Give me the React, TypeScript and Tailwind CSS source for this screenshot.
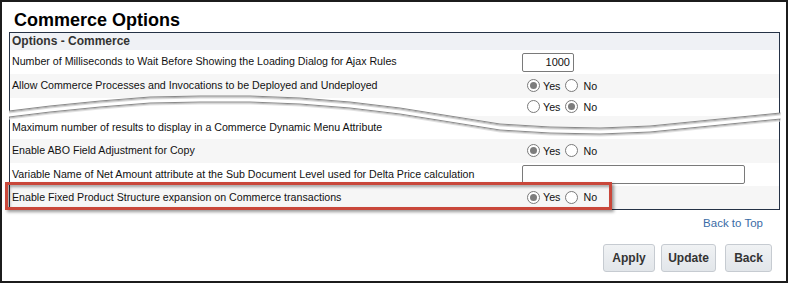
import React from 'react';

type Ctl =
  | { kind: 'none' }
  | { kind: 'input'; value: string; width: string; align: 'right' | 'left' }
  | { kind: 'radio'; yes: boolean };

type Row = { label: string; ctl: Ctl; h: string; gray?: boolean; marked?: boolean };

const upperRows: Row[] = [
  {
    label: 'Number of Milliseconds to Wait Before Showing the Loading Dialog for Ajax Rules',
    ctl: { kind: 'input', value: '1000', width: 'w-[52px]', align: 'right' },
    h: 'h-[24px]'
  },
  {
    label: 'Allow Commerce Processes and Invocations to be Deployed and Undeployed',
    ctl: { kind: 'radio', yes: true },
    h: 'h-[24px]',
    gray: true
  },
  { label: '', ctl: { kind: 'radio', yes: false }, h: 'h-[18px]' }
];

const lowerRows: Row[] = [
  { label: 'Maximum number of results to display in a Commerce Dynamic Menu Attribute', ctl: { kind: 'none' }, h: 'h-[23px]' },
  { label: 'Enable ABO Field Adjustment for Copy', ctl: { kind: 'radio', yes: true }, h: 'h-[24px]', gray: true },
  {
    label: 'Variable Name of Net Amount attribute at the Sub Document Level used for Delta Price calculation',
    ctl: { kind: 'input', value: '', width: 'w-[223px]', align: 'left' },
    h: 'h-[23px]'
  },
  {
    label: 'Enable Fixed Product Structure expansion on Commerce transactions',
    ctl: { kind: 'radio', yes: true },
    h: 'h-[23px]',
    gray: true,
    marked: true
  }
];

// torn-paper edge of the cut in the middle of the panel
const tearTop = [
  [9, 111], [50, 106], [100, 101], [150, 97], [200, 96], [250, 96], [300, 98], [350, 102],
  [400, 108], [450, 116], [500, 124], [550, 127], [600, 128], [650, 126], [700, 121], [740, 117], [780.5, 113]
];
const tearBottom = tearTop.map(([x, y]) => [x, y + 6]);
const pts = (p: number[][], dy = 0) => p.map(([x, y]) => `${x},${y + dy}`).join(' ');

function Radio({ on }: { on: boolean }) {
  return (
    <span className="w-[13px] h-[13px] rounded-full border border-[#7a7a7a] bg-white flex items-center justify-center">
      {on && <span className="w-[7px] h-[7px] rounded-full bg-[#7d7d7d]" />}
    </span>
  );
}

function Control({ ctl }: { ctl: Ctl }) {
  if (ctl.kind === 'input') {
    return (
      <div
        className={`${ctl.width} h-[19px] border border-[#7a7a7a] rounded-[2px] bg-white px-[3px] text-[11px] leading-[17px] ${
          ctl.align === 'right' ? 'text-right' : 'text-left'
        }`}
      >
        {ctl.value}
      </div>
    );
  }
  if (ctl.kind === 'radio') {
    return (
      <div className="flex items-center pl-[5px] text-[10.7px]">
        <Radio on={ctl.yes} />
        <span className="ml-[3px]">Yes</span>
        <span className="ml-[5px]">
          <Radio on={!ctl.yes} />
        </span>
        <span className="ml-[5px]">No</span>
      </div>
    );
  }
  return null;
}

function OptionRow({ row }: { row: Row }) {
  return (
    <div className={`relative grid grid-cols-[512px_1fr] items-center ${row.h} ${row.gray ? 'bg-[#f6f6f6]' : 'bg-white'}`}>
      <div className="pl-[2px] text-[10.65px] text-[#111] whitespace-nowrap">{row.label}</div>
      <Control ctl={row.ctl} />
      {row.marked && (
        <div className="absolute -left-[5px] -top-[4px] w-[607px] h-[28px] border-[3px] border-[#c9473a] shadow-[2px_2px_3px_rgba(0,0,0,0.4),inset_2px_2px_3px_rgba(0,0,0,0.35)]" />
      )}
    </div>
  );
}

export default function App() {
  return (
    <div className="relative w-[788px] h-[283px] bg-white overflow-hidden font-['Liberation_Sans',Arial,sans-serif] text-[#111]">
      <div className="h-full border-2 border-[#1c1c1c] pl-[7px] pr-[6px]">
        <h1 className="h-[30px] pt-[8px] pl-[5px] text-[18px] leading-[21px] font-bold text-black">Commerce Options</h1>

        <div className="border border-[#253246]">
          <div className="h-[17px] bg-[#eff1f5] pl-[2px] text-[12px] leading-[17px] font-bold text-[#333]">
            Options - Commerce
          </div>
          {upperRows.map((row, i) => (
            <OptionRow key={i} row={row} />
          ))}
          {lowerRows.map((row, i) => (
            <OptionRow key={i} row={row} />
          ))}
        </div>

        <div className="h-[28px] flex items-center justify-end pr-[17px]">
          <a href="#" className="text-[11.5px] text-[#3a6ba6]">
            Back to Top
          </a>
        </div>

        <div className="mt-[6px] flex justify-end pr-[8px]">
          <button className="w-[52px] h-[28px] rounded-[3px] border border-[#c6cbd1] bg-gradient-to-b from-[#f0f2f4] to-[#e2e6ea] text-[12px] font-bold text-[#333]">
            Apply
          </button>
          <button className="ml-[6px] w-[55px] h-[28px] rounded-[3px] border border-[#c6cbd1] bg-gradient-to-b from-[#f0f2f4] to-[#e2e6ea] text-[12px] font-bold text-[#333]">
            Update
          </button>
          <button className="ml-[9px] w-[47px] h-[28px] rounded-[3px] border border-[#c6cbd1] bg-gradient-to-b from-[#f0f2f4] to-[#e2e6ea] text-[12px] font-bold text-[#333]">
            Back
          </button>
        </div>
      </div>

      <svg className="absolute left-0 top-0 pointer-events-none" width="788" height="283" viewBox="0 0 788 283">
        <polygon points="445,116 500,124 550,127 600,128 650,126 700,121 740,117 746,116" fill="#f6f6f6" />
        <polygon points={`${pts(tearTop)} ${pts([...tearBottom].reverse())}`} fill="#ffffff" />
        <polyline points={pts(tearTop, 2)} fill="none" stroke="#dcdcdc" strokeWidth="1" />
        <polyline points={pts(tearTop, 1)} fill="none" stroke="#b4b4b4" strokeWidth="1" />
        <polyline points={pts(tearTop)} fill="none" stroke="#8a8a8a" strokeWidth="1" />
        <polyline points={pts(tearBottom, 2)} fill="none" stroke="#e2e2e2" strokeWidth="1" />
        <polyline points={pts(tearBottom, 1)} fill="none" stroke="#bdbdbd" strokeWidth="1" />
        <polyline points={pts(tearBottom)} fill="none" stroke="#8a8a8a" strokeWidth="1" />
      </svg>
    </div>
  );
}
